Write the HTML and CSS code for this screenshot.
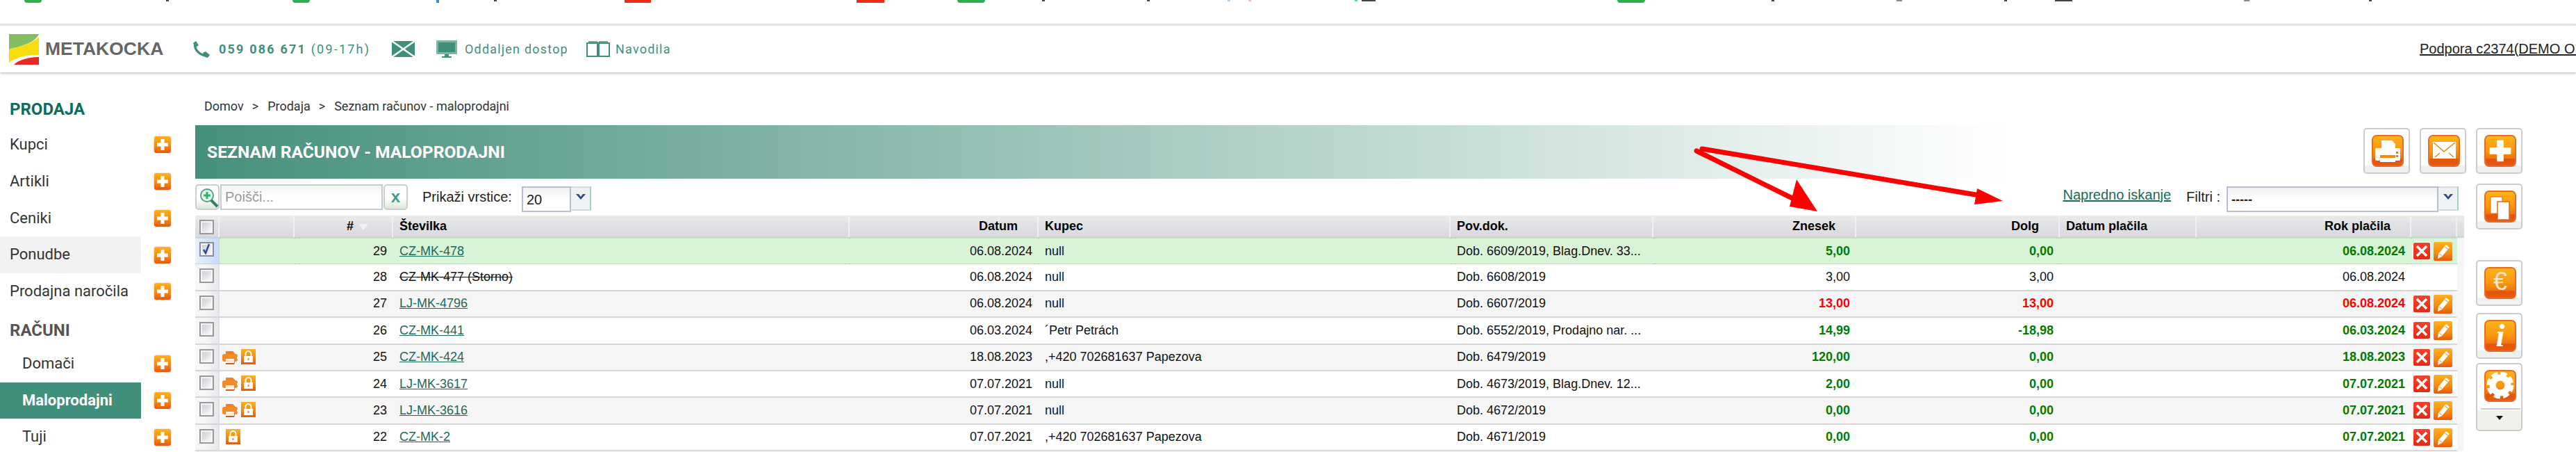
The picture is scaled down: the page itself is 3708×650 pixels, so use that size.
FILE: index.html

```html
<!DOCTYPE html>
<html>
  <head>
    <meta charset="utf-8" />
    <title>Seznam računov - maloprodajni</title>
    <link rel="stylesheet" href="styles.css">
  </head>

  <body>
    <svg class="defs" width="0" height="0">
      <symbol id="i-plus" viewBox="0 0 24 24"><path d="M9.500 4h5v5.500H20v5h-5.500V20h-5v-5.500H4v-5h5.500z" fill="#fff"/></symbol>
      <symbol id="i-printer" viewBox="0 0 46 46">
        <path d="M14 8h15l5 5v6H14z" fill="#fff"/>
        <path d="M7 19h32q2 0 2 2v14q0 2-2 2h-5v-5H12v5H7q-2 0-2-2V21q0-2 2-2z" fill="#fff"/>
        <path d="M12 29h22v9H12z" fill="#f58a10"/>
        <path d="M12 33h22v6H12z" fill="#fff"/>
        <path d="M35 24h3v3h-3zM35 29h3v3h-3z" fill="#f0760e"/>
      </symbol>
      <symbol id="i-mail" viewBox="0 0 46 46">
        <path d="M7 10h33v24H7z" fill="#fff"/>
        <path d="M8 11l15 13 16-13M10 32l7-6M37 32l-7-6" fill="none" stroke="#f0820e" stroke-width="1.500"/>
      </symbol>
      <symbol id="i-copy" viewBox="0 0 46 46">
        <path d="M9 9h17v24H9z" fill="#fff" stroke="#e8660c" stroke-width="1"/>
        <path d="M19 16h17v26H19z" fill="#fff" stroke="#e8660c" stroke-width="1.500"/>
      </symbol>
      <symbol id="i-gear" viewBox="0 0 46 46">
        <circle cx="23" cy="22" r="11" fill="none" stroke="#fff" stroke-width="9"/>
        <circle cx="23" cy="22" r="16" fill="none" stroke="#fff" stroke-width="7" stroke-dasharray="8.500 4.066"/>
      </symbol>
      <symbol id="i-x" viewBox="0 0 24 24"><path d="M5 5l14 14M19 5L5 19" stroke="#fff" stroke-width="3.500" fill="none"/></symbol>
      <symbol id="i-pencil" viewBox="0 0 27 27">
        <path d="M18 4l5 4-11 13-6 3 1-7z" fill="#fff"/>
        <path d="M16.500 7l4.500 3.500" stroke="#f2a23c" stroke-width="1.200"/>
        <path d="M8 17l4 3" stroke="#f5b35c" stroke-width="1.500"/>
      </symbol>
      <symbol id="i-lock" viewBox="0 0 21 22">
        <path d="M6.500 10V7a4 4 0 0 1 8 0v3" fill="none" stroke="#fff" stroke-width="2"/>
        <path d="M4 10h13v9H4z" fill="#fff"/>
        <path d="M9.500 13h2v3h-2z" fill="#f28a1c"/>
      </symbol>
      <symbol id="i-rowprint" viewBox="0 0 22 20">
        <path d="M5 1h10l3 3v3H5z" fill="#f0811f"/>
        <path d="M3 5h16q3 0 3 3v1h-1v3h1v1q0 3-3 3h-1v3H5v-3H3q-3 0-3-3V8q0-3 3-3z" fill="#f28a26"/>
        <path d="M5 12h12v6H5z" fill="#fdeede"/>
        <path d="M5 18h12v2H5z" fill="#e8540f"/>
      </symbol>
      <symbol id="i-chevron" viewBox="0 0 16 10"><path d="M1 1h4l3 4 3-4h4L8 9z" fill="#2e4a86"/></symbol>
    </svg>

    <div class="favs">
      <i class="green"></i><i class="speck"></i><i class="green"></i><i class="blue"></i><i class="speck"></i>
      <i class="red"></i><i class="red"></i><i class="green"></i><i class="speck"></i><i class="speck"></i>
      <i class="sky"></i><i class="pink"></i><i class="cyan"></i><i class="speck"></i><i class="green"></i>
      <i class="speck"></i><i class="grey"></i><i class="speck"></i><i class="speck"></i><i class="grey"></i><i class="speck"></i>
    </div>

    <header class="topbar">
      <svg class="logo" width="43" height="44" viewBox="0 0 43 44">
        <rect width="43" height="44" fill="#fff"/>
        <path d="M0 0h43C38 12 20 17 0 22z" fill="#85bd63"/>
        <path d="M0 22C20 17 36 12 43 4v26C26 30 10 33 0 41z" fill="#f7dc10"/>
        <path d="M7 44C14 37 28 33 43 33v11z" fill="#e22b22"/>
      </svg>
      <span class="brand">METAKOCKA</span>

      <svg class="ico-phone" width="25" height="24" viewBox="0 0 25 24">
        <path d="M4 3C2 10 8 20 20 21" fill="none" stroke="#3f8f7a" stroke-width="3.500"/>
        <path d="M1 3l4-3 4 6-4 3zM15 17l4-2 6 5-3 4-4-1z" fill="#3f8f7a"/>
      </svg>
      <span class="phone"><b>059 086 671</b> (09-17h)</span>

      <svg class="ico-mail" width="33" height="23" viewBox="0 0 33 23">
        <rect width="33" height="23" fill="#3f8f7a"/>
        <path d="M0 0l33 23M33 0L0 23" stroke="#fff" stroke-width="2.500"/>
      </svg>

      <svg class="ico-screen" width="30" height="25" viewBox="0 0 30 25">
        <path d="M1 0h28q1 0 1 1v18q0 1-1 1H1q-1 0-1-1V1q0-1 1-1z" fill="#7fb5a6"/>
        <rect x="3" y="3" width="24" height="14" fill="#3f8f7a"/>
        <path d="M12 20h6v3h4v2H8v-2h4z" fill="#3f8f7a"/>
      </svg>
      <span class="toplink screen">Oddaljen dostop</span>

      <svg class="ico-book" width="34" height="24" viewBox="0 0 34 24">
        <path d="M1 3h15v19H1zM18 3h15v19H18z" fill="#fff" stroke="#3f8f7a" stroke-width="2"/>
        <path d="M3 1h12l2 2 2-2h12" fill="none" stroke="#3f8f7a" stroke-width="1.500"/>
      </svg>
      <span class="toplink book">Navodila</span>

      <a class="support" href="#">Podpora c2374(DEMO OD)</a>
    </header>

    <div class="page">
      <nav class="side">
        <h2 class="sec first">PRODAJA</h2>
        <div class="item"><a>Kupci</a><span class="addbtn"><svg><use href="#i-plus"/></svg></span></div>
        <div class="item"><a>Artikli</a><span class="addbtn"><svg><use href="#i-plus"/></svg></span></div>
        <div class="item"><a>Ceniki</a><span class="addbtn"><svg><use href="#i-plus"/></svg></span></div>
        <div class="item hover"><a>Ponudbe</a><span class="addbtn"><svg><use href="#i-plus"/></svg></span></div>
        <div class="item"><a>Prodajna naročila</a><span class="addbtn"><svg><use href="#i-plus"/></svg></span></div>
        <h2 class="sec grey">RAČUNI</h2>
        <div class="item sub"><a>Domači</a><span class="addbtn"><svg><use href="#i-plus"/></svg></span></div>
        <div class="item sub active"><a>Maloprodajni</a><span class="addbtn"><svg><use href="#i-plus"/></svg></span></div>
        <div class="item sub"><a>Tuji</a><span class="addbtn"><svg><use href="#i-plus"/></svg></span></div>
      </nav>

      <main class="main">
        <div class="crumbs"><span>Domov</span><span class="gt">&gt;</span><span>Prodaja</span><span class="gt">&gt;</span><span>Seznam računov - maloprodajni</span></div>

        <div class="titlerow">
          <h1 class="title">SEZNAM RAČUNOV - MALOPRODAJNI</h1>
          <div class="titlebtns">
            <span class="tool"><span class="tile"><svg><use href="#i-printer"/></svg></span></span>
            <span class="tool"><span class="tile"><svg><use href="#i-mail"/></svg></span></span>
            <span class="tool"><span class="tile"><svg><use href="#i-plus"/></svg></span></span>
          </div>
        </div>

        <div class="workarea">
          <div class="listing">
            <div class="filters">
              <span class="sbtn">
                <svg width="30" height="30" viewBox="0 0 30 30">
                  <circle cx="12" cy="11" r="9" fill="#e4f5ea" stroke="#4ea58a" stroke-width="2"/>
                  <path d="M12 6v10M7 11h10" stroke="#2eb36b" stroke-width="3"/>
                  <path d="M18 18l9 9" stroke="#3c7d62" stroke-width="4"/>
                </svg>
              </span>
              <span class="sinput">Poišči...</span>
              <span class="sbtn clear">x</span>
              <label class="rowslabel">Prikaži vrstice:</label>
              <span class="combo small"><span class="val">20</span><span class="arrow"><svg width="16" height="10"><use href="#i-chevron"/></svg></span></span>
              <a class="advanced" href="#">Napredno iskanje</a>
              <label class="filterlabel">Filtri :</label>
              <span class="combo wide"><span class="val dashes">-----</span><span class="arrow"><svg width="16" height="10"><use href="#i-chevron"/></svg></span></span>
            </div>

            <table class="grid">
              <colgroup>
                <col class="c-check"><col class="c-icons"><col class="c-num"><col class="c-doc"><col class="c-date">
                <col class="c-buyer"><col class="c-ref"><col class="c-amt"><col class="c-debt"><col class="c-paid">
                <col class="c-due"><col class="c-act"><col class="c-gut">
              </colgroup>
              <thead>
                <tr>
                  <th class="chk"><span class="cb"></span></th>
                  <th></th>
                  <th class="hash"># <i class="sort"></i></th>
                  <th class="l">Številka</th>
                  <th class="r">Datum</th>
                  <th class="l">Kupec</th>
                  <th class="l">Pov.dok.</th>
                  <th class="r">Znesek</th>
                  <th class="r">Dolg</th>
                  <th class="l">Datum plačila</th>
                  <th class="r">Rok plačila</th>
                  <th></th>
                  <th class="gut"></th>
                </tr>
              </thead>
              <tbody>
                <tr class="sel">
                  <td class="chk"><span class="cb on"><svg width="17" height="17" viewBox="0 0 17 17"><path d="M4 9l3 5 5-13" fill="none" stroke="#2f4a9a" stroke-width="2.500"/></svg></span></td>
                  <td class="ic"></td>
                  <td class="r">29</td><td><a href="#">CZ-MK-478</a></td><td class="r">06.08.2024</td><td>null</td>
                  <td>Dob. 6609/2019, Blag.Dnev. 33...</td><td class="r ok">5,00</td><td class="r ok">0,00</td><td></td><td class="r ok">06.08.2024</td>
                  <td class="act"><span class="del halo"><svg><use href="#i-x"/></svg></span><span class="edit"><svg><use href="#i-pencil"/></svg></span></td>
                  <td class="gut"></td>
                </tr>
                <tr>
                  <td class="chk"><span class="cb"></span></td>
                  <td class="ic"></td>
                  <td class="r">28</td><td><s>CZ-MK-477 (Storno)</s></td><td class="r">06.08.2024</td><td>null</td>
                  <td>Dob. 6608/2019</td><td class="r">3,00</td><td class="r">3,00</td><td></td><td class="r">06.08.2024</td>
                  <td class="act"></td>
                  <td class="gut"></td>
                </tr>
                <tr class="alt">
                  <td class="chk"><span class="cb"></span></td>
                  <td class="ic"></td>
                  <td class="r">27</td><td><a href="#">LJ-MK-4796</a></td><td class="r">06.08.2024</td><td>null</td>
                  <td>Dob. 6607/2019</td><td class="r late">13,00</td><td class="r late">13,00</td><td></td><td class="r late">06.08.2024</td>
                  <td class="act"><span class="del"><svg><use href="#i-x"/></svg></span><span class="edit"><svg><use href="#i-pencil"/></svg></span></td>
                  <td class="gut"></td>
                </tr>
                <tr>
                  <td class="chk"><span class="cb"></span></td>
                  <td class="ic"></td>
                  <td class="r">26</td><td><a href="#">CZ-MK-441</a></td><td class="r">06.03.2024</td><td>´Petr Petrách</td>
                  <td>Dob. 6552/2019, Prodajno nar. ...</td><td class="r ok">14,99</td><td class="r ok">-18,98</td><td></td><td class="r ok">06.03.2024</td>
                  <td class="act"><span class="del"><svg><use href="#i-x"/></svg></span><span class="edit"><svg><use href="#i-pencil"/></svg></span></td>
                  <td class="gut"></td>
                </tr>
                <tr class="alt">
                  <td class="chk"><span class="cb"></span></td>
                  <td class="ic"><svg class="rp"><use href="#i-rowprint"/></svg><span class="lock"><svg><use href="#i-lock"/></svg></span></td>
                  <td class="r">25</td><td><a href="#">CZ-MK-424</a></td><td class="r">18.08.2023</td><td>,+420 702681637 Papezova</td>
                  <td>Dob. 6479/2019</td><td class="r ok">120,00</td><td class="r ok">0,00</td><td></td><td class="r ok">18.08.2023</td>
                  <td class="act"><span class="del"><svg><use href="#i-x"/></svg></span><span class="edit"><svg><use href="#i-pencil"/></svg></span></td>
                  <td class="gut"></td>
                </tr>
                <tr>
                  <td class="chk"><span class="cb"></span></td>
                  <td class="ic"><svg class="rp"><use href="#i-rowprint"/></svg><span class="lock"><svg><use href="#i-lock"/></svg></span></td>
                  <td class="r">24</td><td><a href="#">LJ-MK-3617</a></td><td class="r">07.07.2021</td><td>null</td>
                  <td>Dob. 4673/2019, Blag.Dnev. 12...</td><td class="r ok">2,00</td><td class="r ok">0,00</td><td></td><td class="r ok">07.07.2021</td>
                  <td class="act"><span class="del"><svg><use href="#i-x"/></svg></span><span class="edit"><svg><use href="#i-pencil"/></svg></span></td>
                  <td class="gut"></td>
                </tr>
                <tr class="alt">
                  <td class="chk"><span class="cb"></span></td>
                  <td class="ic"><svg class="rp"><use href="#i-rowprint"/></svg><span class="lock"><svg><use href="#i-lock"/></svg></span></td>
                  <td class="r">23</td><td><a href="#">LJ-MK-3616</a></td><td class="r">07.07.2021</td><td>null</td>
                  <td>Dob. 4672/2019</td><td class="r ok">0,00</td><td class="r ok">0,00</td><td></td><td class="r ok">07.07.2021</td>
                  <td class="act"><span class="del"><svg><use href="#i-x"/></svg></span><span class="edit"><svg><use href="#i-pencil"/></svg></span></td>
                  <td class="gut"></td>
                </tr>
                <tr>
                  <td class="chk"><span class="cb"></span></td>
                  <td class="ic only"><span class="lock"><svg><use href="#i-lock"/></svg></span></td>
                  <td class="r">22</td><td><a href="#">CZ-MK-2</a></td><td class="r">07.07.2021</td><td>,+420 702681637 Papezova</td>
                  <td>Dob. 4671/2019</td><td class="r ok">0,00</td><td class="r ok">0,00</td><td></td><td class="r ok">07.07.2021</td>
                  <td class="act"><span class="del"><svg><use href="#i-x"/></svg></span><span class="edit"><svg><use href="#i-pencil"/></svg></span></td>
                  <td class="gut"></td>
                </tr>
              </tbody>
            </table>
          </div>

          <div class="sidetools">
            <span class="tool"><span class="tile"><svg><use href="#i-copy"/></svg></span></span>
            <span class="tool euro"><span class="tile glyph">€</span></span>
            <span class="tool info"><span class="tile glyph">i</span></span>
            <span class="tool more">
              <span class="tile"><svg><use href="#i-gear"/></svg></span>
              <span class="drop"></span>
            </span>
          </div>
        </div>
      </main>
    </div>

    <svg class="arrows" width="520" height="125" viewBox="0 0 520 125">
      <path d="M42 27L188 99" stroke="#f00" stroke-width="7" stroke-linecap="round"/>
      <path d="M186 68L216 114 176 107z" fill="#f00"/>
      <path d="M50 24L450 91" stroke="#f00" stroke-width="7" stroke-linecap="round"/>
      <path d="M446 81L483 99 442 104z" fill="#f00"/>
    </svg>
  </body>
</html>
```

FILE: styles.css

```css
* {
  box-sizing: border-box;
}
html,
body {
  margin: 0;
  height: 650px;
  overflow: hidden;
}
body {
  position: relative;
  background: #fff;
  color: #222;
  font-family: "Liberation Sans", Arial, sans-serif;
  font-size: 18px;
}
a {
  color: #1a6a5a;
}
.defs {
  position: absolute;
}

/* cut off bookmarks at the very top */
.favs {
  display: flex;
  height: 34px;
  align-items: flex-start;
}
.favs i {
  display: block;
  height: 2px;
  width: 4px;
  flex: none;
  background: #444;
}
.favs .green {
  height: 4px;
  width: 40px;
  background: #2fae4e;
  border-radius: 0 0 18px 18px;
}
.favs .red {
  height: 4px;
  width: 38px;
  background: #f02a1a;
}
.favs .blue {
  height: 4px;
  background: #3b82e8;
}
.favs .sky { background: #9cd4f5; }
.favs .pink { background: #f7b6cf; }
.favs .cyan { background: #3fd6d6; }
.favs .grey { background: #888; width: 8px; }
.favs i:nth-child(1) { margin-left: 35px; width: 25px; }
.favs i:nth-child(2) { margin-left: 179px; }
.favs i:nth-child(3) { margin-left: 178px; width: 25px; }
.favs i:nth-child(4) { margin-left: 182px; }
.favs i:nth-child(5) { margin-left: 79px; }
.favs i:nth-child(6) { margin-left: 184px; }
.favs i:nth-child(7) { margin-left: 296px; width: 40px; }
.favs i:nth-child(8) { margin-left: 105px; }
.favs i:nth-child(9) { margin-left: 82px; }
.favs i:nth-child(10) { margin-left: 147px; }
.favs i:nth-child(11) { margin-left: 112px; }
.favs i:nth-child(12) { margin-left: 26px; }
.favs i:nth-child(13) { margin-left: 149px; }
.favs i:nth-child(14) { margin-left: 6px; width: 20px; }
.favs i:nth-child(15) { margin-left: 348px; }
.favs i:nth-child(16) { margin-left: 182px; }
.favs i:nth-child(17) { margin-left: 176px; }
.favs i:nth-child(18) { margin-left: 147px; }
.favs i:nth-child(19) { margin-left: 69px; width: 25px; }
.favs i:nth-child(20) { margin-left: 247px; }
.favs i:nth-child(21) { margin-left: 172px; }

/* header */
.topbar {
  display: flex;
  align-items: center;
  height: 70px;
  padding-left: 13px;
  border-top: 3px solid #e0e4df;
  box-shadow: 0 2px 3px #c8c8c8;
}
.logo,
.topbar svg {
  flex: none;
}
.brand {
  margin-left: 9px;
  color: #666;
  font-size: 26.5px;
  font-weight: bold;
  width: 170px;
  white-space: nowrap;
}
.ico-phone {
  margin-left: 42px;
}
.phone {
  margin-left: 13px;
  width: 218px;
  color: #3f8f7a;
  font-family: Roboto, sans-serif;
  font-size: 18px;
  letter-spacing: 2.2px;
  white-space: nowrap;
}
.ico-mail {
  margin-left: 31px;
}
.ico-screen {
  margin-left: 31px;
}
.toplink {
  color: #3f8f7a;
  font-family: Roboto, sans-serif;
  font-size: 18px;
  letter-spacing: 1.2px;
  white-space: nowrap;
}
.toplink.screen {
  margin-left: 11px;
  width: 150px;
}
.ico-book {
  margin-left: 25px;
}
.toplink.book {
  margin-left: 8px;
  width: 78px;
}
.support {
  margin-left: auto;
  width: 225px;
  flex: none;
  overflow: hidden;
  white-space: nowrap;
  color: #222;
  font-size: 20px;
}

/* page */
.page {
  display: flex;
  padding-top: 26px;
}
.side {
  width: 281px;
  flex: none;
}
.sec {
  margin: 0;
  padding-left: 14px;
  height: 52px;
  line-height: 54px;
  font-family: Roboto, sans-serif;
  font-size: 24px;
  font-weight: bold;
  color: #0f6b5a;
}
.sec.grey {
  height: 51px;
  padding-top: 8px;
  line-height: 43px;
  color: #555;
}
.item {
  display: flex;
  align-items: center;
  height: 52.75px;
}
.item a {
  display: block;
  width: 203px;
  height: 100%;
  padding-left: 14px;
  line-height: 52.75px;
  font-family: Roboto, sans-serif;
  font-size: 22px;
  color: #333;
}
.item.sub a {
  padding-left: 32px;
}
.item.hover a {
  background: #f2f2f2;
}
.item.active a {
  background: #3f8f7a;
  color: #fff;
  font-weight: bold;
}
.addbtn {
  display: block;
  width: 24px;
  height: 24px;
  margin-left: 19px;
  border-radius: 3px;
  background: linear-gradient(#ffb11c, #f78a0c 55%, #e9580c);
  box-shadow: 0 0 2px #f2a27a;
}
.addbtn svg {
  display: block;
  width: 24px;
  height: 24px;
}

.main {
  flex: 1;
  min-width: 0;
}
.crumbs {
  display: flex;
  height: 50px;
  padding: 10px 0 0 13px;
  font-family: Roboto, sans-serif;
  font-size: 18px;
  line-height: 26px;
  color: #333;
}
.crumbs .gt {
  margin: 0 13px 0 12px;
}
.titlerow {
  display: flex;
  height: 77px;
}
.title {
  margin: 0;
  width: 2603px;
  height: 77px;
  padding-left: 17px;
  line-height: 77px;
  background: linear-gradient(90deg, #45907c, #fff);
  color: #fff;
  font-family: Roboto, sans-serif;
  font-size: 24.6px;
  font-weight: bold;
}
.titlebtns {
  display: flex;
  gap: 14px;
  margin: 4px 0 0 518px;
}

/* orange buttons */
.tool {
  display: block;
  width: 67px;
  height: 66px;
  padding: 8px 0 0 10px;
  border: 2px solid #ccc;
  border-radius: 5px;
  background: linear-gradient(#fff 84%, #eff2ec 84%);
  flex: none;
}
.tile {
  display: block;
  width: 46px;
  height: 46px;
  border: 2px solid #ea6a2a;
  border-radius: 7px;
  background: linear-gradient(#ffb31a, #f9960e 50%, #ee760c 75%, #e4540a 78%, #e85a0c);
}
.tile svg {
  display: block;
  width: 46px;
  height: 46px;
  margin: -2px;
}
.glyph {
  text-align: center;
  color: #fff;
}
.euro .glyph {
  font-size: 36px;
  line-height: 38px;
  color: #fde4cc;
}
.info .glyph {
  font-family: "Liberation Serif", serif;
  font-size: 46px;
  font-style: italic;
  font-weight: bold;
  line-height: 42px;
}
.more {
  height: 98px;
  background: linear-gradient(#fff 70%, #eff2ec 70%);
}
.drop {
  display: block;
  position: relative;
  width: 57px;
  height: 28px;
  margin: 9px 0 0 -5px;
  border-top: 2px solid #ccc;
}
.drop::after {
  content: "";
  position: absolute;
  left: 22px;
  top: 9px;
  border: 5px solid transparent;
  border-top: 6px solid #111;
}

.workarea {
  display: flex;
  padding-top: 7px;
}
.listing {
  width: 3266px;
  flex: none;
}
.sidetools {
  display: flex;
  flex-direction: column;
  margin-left: 17px;
}
.sidetools .tool:nth-child(2) {
  margin-top: 44px;
}
.sidetools .tool:nth-child(3) {
  margin-top: 10px;
}
.sidetools .tool:nth-child(4) {
  margin-top: 6px;
}

/* search and filter row */
.filters {
  display: flex;
  align-items: flex-start;
  height: 46px;
  padding: 1px 8px 0 0;
  font-size: 20px;
}
.sbtn {
  display: block;
  width: 35px;
  height: 37px;
  padding: 3px 0 0 3px;
  border: 2px solid #ccc;
  border-radius: 5px;
  background: linear-gradient(#fff 55%, #d9e8da);
  flex: none;
}
.sbtn.clear {
  padding: 0;
  text-align: center;
  color: #3f9f8a;
  font-size: 24px;
  font-weight: bold;
  line-height: 31px;
}
.sinput {
  display: block;
  width: 234px;
  height: 37px;
  margin: 0 1px;
  padding-left: 5px;
  border: 2px solid #c8c8d0;
  background: linear-gradient(#f2f4f4, #fff 50%);
  color: #999;
  line-height: 33px;
  flex: none;
}
.rowslabel {
  margin-left: 21px;
  line-height: 36px;
  width: 143px;
  flex: none;
}
.combo {
  display: flex;
  align-items: flex-start;
  margin-top: 3px;
  flex: none;
}
.combo .val {
  display: block;
  height: 37px;
  padding-left: 5px;
  border: 2px solid #b8bcd0;
  background: linear-gradient(#eef1f1, #fff 50%);
  line-height: 35px;
}
.combo.small .val {
  width: 71px;
}
.combo.wide .val {
  width: 305px;
}
.combo .arrow {
  display: flex;
  justify-content: center;
  align-items: center;
  width: 29px;
  height: 35px;
  padding-bottom: 6px;
  border: 2px solid #d4d8dc;
  border-left: 0;
  border-right-color: #9fd4b8;
  background: #eff1f2;
}
.dashes {
  font-weight: bold;
  font-size: 18px;
}
.advanced {
  margin-left: auto;
  line-height: 30px;
}
.filterlabel {
  margin-left: 22px;
  margin-right: 9px;
  line-height: 36px;
}

/* table */
.grid {
  width: 3266px;
  table-layout: fixed;
  border-collapse: separate;
  border-spacing: 0;
  color: #111;
}
.c-check { width: 35px; }
.c-icons { width: 108px; }
.c-num { width: 142px; }
.c-doc { width: 657px; }
.c-date { width: 272px; }
.c-buyer { width: 593px; }
.c-ref { width: 292px; }
.c-amt { width: 292px; }
.c-debt { width: 293px; }
.c-paid { width: 197px; }
.c-due { width: 309px; }
.c-act { width: 66px; }
.c-gut { width: 10px; }
.grid th {
  height: 32px;
  padding: 0 9px;
  border-right: 2px solid #f0f0f2;
  border-bottom: 2px solid #d2d3d5;
  background: linear-gradient(#e8e8e8 25%, #e3e4e6 25%, #d9dadd);
  font-weight: bold;
  color: #000;
  text-align: left;
  overflow: hidden;
  white-space: nowrap;
}
.grid th.r {
  padding-right: 28px;
  text-align: right;
}
.grid th.hash {
  padding-right: 34px;
  text-align: right;
}
.grid th.gut {
  border-right: 0;
}
.sort {
  display: inline-block;
  margin-left: 2px;
  border: 7px solid transparent;
  border-top: 9px solid #f2f2f2;
  border-bottom: 0;
}
.grid td {
  height: 38.4px;
  padding: 0 9px;
  border-bottom: 2px solid #d6d6d6;
  white-space: nowrap;
  overflow: hidden;
}
.grid td.r {
  text-align: right;
}
.alt td {
  background: #f5f5f5;
}
.sel td {
  background: #d9f3d7;
  border-bottom: 1px dotted #a9c9a9;
  border-top: 1px dotted #a9c9a9;
}
.grid td.gut {
  padding: 0;
  border: 0;
  background: #f5f5f5;
}
.grid td.chk,
.grid th.chk {
  padding: 0 0 0 6px;
  vertical-align: top;
}
.grid td.chk {
  padding-top: 6px;
  border-right: 2px solid #dfe0e3;
  background: linear-gradient(90deg, #f7f7f7 40%, #e6e8ec);
}
.grid .sel td.chk {
  padding-top: 5px;
  border-right: 1px solid #b9d2f5;
  background: linear-gradient(90deg, #e8f0fc, #c6dbf8);
}
.grid th.chk {
  padding-top: 6px;
}
.cb {
  display: block;
  width: 21px;
  height: 21px;
  border: 2px solid #999;
  background: linear-gradient(135deg, #c4c9cf, #fff);
  box-shadow: inset 0 0 0 2px #f4f4f4;
}
.cb.on {
  border-color: #8a8fa0;
}
.cb svg {
  display: block;
}
.ok {
  color: #007c00;
  font-weight: bold;
}
.late {
  color: #f00;
  font-weight: bold;
}
.grid td.ic {
  padding: 6px 0 0 4px;
  vertical-align: top;
}
.grid td.ic.only {
  padding-left: 9px;
}
.rp {
  display: inline-block;
  width: 22px;
  height: 20px;
  margin: 2px 5px 0 0;
  vertical-align: top;
}
.lock {
  display: inline-block;
  width: 21px;
  height: 22px;
  vertical-align: top;
  background: linear-gradient(#ffb01a, #f5860c 60%, #e65a0c);
}
.lock svg {
  display: block;
  width: 21px;
  height: 22px;
}
.grid td.act {
  padding: 5px 0 0 3px;
  vertical-align: top;
}
.del,
.edit {
  display: inline-block;
  vertical-align: top;
  border-radius: 2px;
}
.del {
  width: 24px;
  height: 24px;
  margin-top: 1px;
  background: linear-gradient(#f8402a, #e42a12);
}
.del.halo {
  box-shadow: 0 0 0 1.5px #fff;
}
.edit {
  width: 27px;
  height: 27px;
  margin-left: 5px;
  background: linear-gradient(#ffb11c, #f78a0c 60%, #e8580c);
}
.del svg,
.edit svg {
  display: block;
  width: 100%;
  height: 100%;
}

/* annotation drawn on top of the screenshot */
.arrows {
  position: absolute;
  left: 2400px;
  top: 190px;
}
```
